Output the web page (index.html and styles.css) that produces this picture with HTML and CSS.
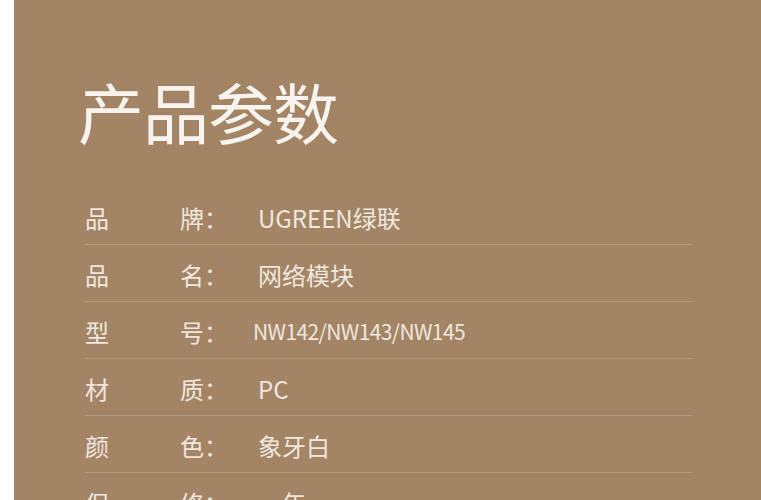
FILE: index.html
```html
<!DOCTYPE html>
<html lang="zh-CN">
<head>
    <meta charset="UTF-8">
    <meta name="viewport" content="width=device-width, initial-scale=1.0">
    <title>产品参数</title>
    <link rel="stylesheet" href="styles.css">
</head>
<body>
    <div class="panel">
        <h1 class="title">产品参数</h1>
        <div class="specs">
            <div class="row">
                <span class="k1">品</span>
                <span class="k2">牌：</span>
                <span class="val">UGREEN绿联</span>
            </div>
            <div class="row">
                <span class="k1">品</span>
                <span class="k2">名：</span>
                <span class="val">网络模块</span>
            </div>
            <div class="row">
                <span class="k1">型</span>
                <span class="k2">号：</span>
                <span class="val model">NW142/NW143/NW145</span>
            </div>
            <div class="row">
                <span class="k1">材</span>
                <span class="k2">质：</span>
                <span class="val">PC</span>
            </div>
            <div class="row">
                <span class="k1">颜</span>
                <span class="k2">色：</span>
                <span class="val">象牙白</span>
            </div>
            <div class="row">
                <span class="k1">保</span>
                <span class="k2">修：</span>
                <span class="val">一年</span>
            </div>
        </div>
    </div>
</body>
</html>
```

FILE: styles.css
```css
* {
    margin: 0;
    padding: 0;
    box-sizing: border-box;
    font-family: "Noto Sans CJK SC", "Noto Sans", sans-serif;
}

body {
    background: #ffffff;
    height: 500px;
    overflow: hidden;
}

.panel {
    margin-left: 14px;
    height: 100%;
    background: #a38566;
    padding: 65px 0 0 64px;
}

.title {
    font-size: 66px;
    font-weight: 400;
    line-height: 90px;
    color: #f7f3ee;
    letter-spacing: -1px;
    margin-bottom: 33px;
}

.specs {
    width: 607px;
    margin-left: 7px;
}

.row {
    display: grid;
    grid-template-columns: 95px 78px 1fr;
    align-items: center;
    height: 57px;
    border-bottom: 1px solid #b49c83;
    font-size: 24px;
    color: #efe7de;
    padding-top: 2px;
}

.model {
    font-size: 21px;
    letter-spacing: -0.6px;
    margin-left: -5px;
}
```
